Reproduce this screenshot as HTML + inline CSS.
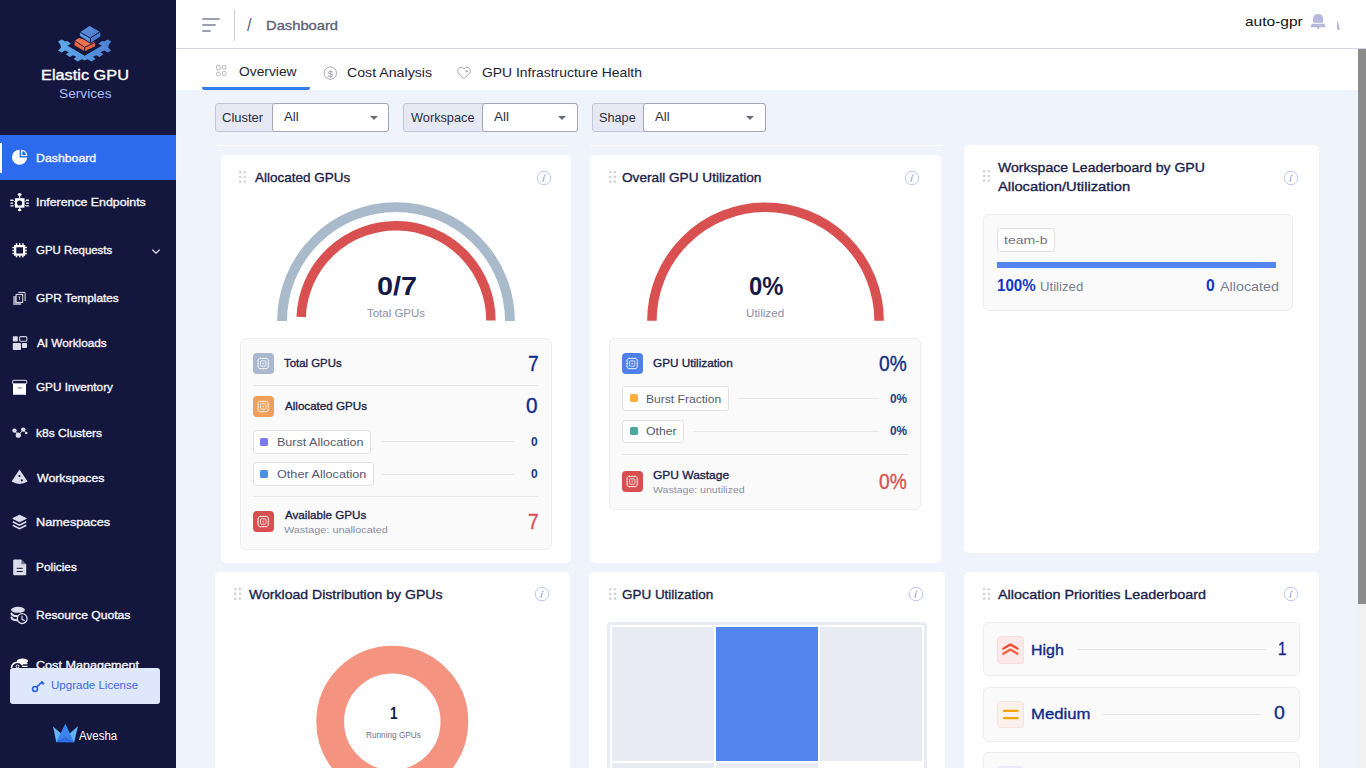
<!DOCTYPE html>
<html><head><meta charset="utf-8"><title>Dashboard</title>
<style>
*{margin:0;padding:0;box-sizing:border-box}
html,body{width:1366px;height:768px;overflow:hidden;background:#eff3fb;font-family:"Liberation Sans",sans-serif}
.a{position:absolute}
.t{position:absolute;white-space:nowrap;transform-origin:0 0}
#side{position:absolute;left:0;top:0;width:176px;height:768px;background:#14173d}
#act{position:absolute;left:0;top:135px;width:176px;height:45px;background:#2c6bed}
#actbar{position:absolute;left:0;top:143px;width:2px;height:30px;background:#fff}
#hdr{position:absolute;left:176px;top:0;width:1190px;height:49px;background:#fff;border-bottom:1px solid #d4d6de}
#tabs{position:absolute;left:176px;top:49px;width:1182px;height:41px;background:#fff}
#uline{position:absolute;left:202px;top:87px;width:108px;height:3px;background:#377bf0;border-radius:1px 1px 3px 3px}
.card{position:absolute;background:#fff;border-radius:5px}
.panel{position:absolute;background:#fafafa;border:1px solid #ededf0;border-radius:6px}
.pill{position:absolute;background:#fff;border:1px solid #e0e0e4;border-radius:3px}
.sq{position:absolute;width:8px;height:8px;border-radius:1.5px}
.ico{position:absolute;width:21px;height:21px;border-radius:4px}
.hl{position:absolute;height:1px;background:#e6e7ec}
.fg{position:absolute;height:29px;border:1px solid #c3c5d8;border-radius:3px;background:#e6e8f4}
.fsel{position:absolute;top:-1px;bottom:-1px;background:#fff;border:1px solid #a3a5b8;border-radius:3px;right:-1px!important}
.arr{position:absolute;width:0;height:0;border-left:4.5px solid transparent;border-right:4.5px solid transparent;border-top:4.5px solid #6b6f7c}
#sb{position:absolute;left:1358px;top:49px;width:8px;height:719px;background:#f1f1f1}
#sbt{position:absolute;left:1358px;top:49px;width:8px;height:555px;background:#8c8c8c}

</style></head><body>
<div id="side"></div>
<div id="act"></div>
<div id="actbar"></div>
<div id="hdr"></div>
<div id="tabs"></div>
<div id="uline"></div>
<!-- header bits -->
<div class="a" style="left:234px;top:10px;width:1px;height:31px;background:#c9cbd6"></div>
<div class="a" style="left:202px;top:18px;width:18px;height:2px;background:#9aa0b4;border-radius:1px"></div>
<div class="a" style="left:202px;top:24px;width:14px;height:2px;background:#9aa0b4;border-radius:1px"></div>
<div class="a" style="left:202px;top:30px;width:9px;height:2px;background:#9aa0b4;border-radius:1px"></div>

<!-- filters -->
<div class="fg" style="left:215px;top:103px;width:174px"><div class="fsel" style="left:56px;right:0"></div><div class="arr" style="left:154px;top:12px"></div></div>
<div class="fg" style="left:403px;top:103px;width:175px"><div class="fsel" style="left:78px;right:0"></div><div class="arr" style="left:154px;top:12px"></div></div>
<div class="fg" style="left:592px;top:103px;width:174px"><div class="fsel" style="left:50px;right:0"></div><div class="arr" style="left:153px;top:12px"></div></div>
<div class="a" style="left:217px;top:145px;width:351px;height:1px;background:#fff"></div><div class="a" style="left:591px;top:145px;width:352px;height:1px;background:#fff"></div>

<!-- cards -->
<div class="card" style="left:221px;top:155px;width:350px;height:408px"></div>
<div class="card" style="left:590px;top:155px;width:351px;height:408px"></div>
<div class="card" style="left:964px;top:145px;width:355px;height:408px"></div>
<div class="card" style="left:215px;top:572px;width:355px;height:220px"></div>
<div class="card" style="left:589px;top:572px;width:356px;height:220px"></div>
<div class="card" style="left:964px;top:572px;width:355px;height:220px"></div>

<!-- scrollbar -->
<div id="sb"></div><div id="sbt"></div>

<!-- card1 panel -->
<div class="panel" style="left:240px;top:338px;width:312px;height:212px"></div>
<div class="ico" style="left:253px;top:353px;background:#a9b8cc"></div>
<div class="hl" style="left:253px;top:385px;width:285px"></div>
<div class="ico" style="left:253px;top:396px;background:#f0a05a"></div>
<div class="pill" style="left:253px;top:430px;width:118px;height:24px"></div>
<div class="sq" style="left:260px;top:438px;background:#7b79f0"></div>
<div class="hl" style="left:381px;top:441px;width:133px"></div>
<div class="pill" style="left:253px;top:462px;width:121px;height:24px"></div>
<div class="sq" style="left:260px;top:470px;background:#4a90e2"></div>
<div class="hl" style="left:382px;top:474px;width:132px"></div>
<div class="hl" style="left:253px;top:496px;width:285px"></div>
<div class="ico" style="left:253px;top:511px;background:#d94f4f"></div>

<!-- card2 panel -->
<div class="panel" style="left:609px;top:338px;width:312px;height:172px"></div>
<div class="ico" style="left:622px;top:353px;background:#4f7fe8"></div>
<div class="pill" style="left:622px;top:386px;width:107px;height:25px"></div>
<div class="sq" style="left:630px;top:394px;background:#fdb040"></div>
<div class="hl" style="left:739px;top:398px;width:140px"></div>
<div class="pill" style="left:622px;top:420px;width:62px;height:23px"></div>
<div class="sq" style="left:630px;top:427px;background:#4aa99c"></div>
<div class="hl" style="left:693px;top:431px;width:186px"></div>
<div class="hl" style="left:622px;top:454px;width:286px"></div>
<div class="ico" style="left:622px;top:471px;background:#d94f4f"></div>

<!-- card3 panel -->
<div class="panel" style="left:983px;top:214px;width:310px;height:97px"></div>
<div class="pill" style="left:997px;top:228px;width:58px;height:24px"></div>
<div class="a" style="left:997px;top:262px;width:279px;height:6px;background:#5386ef"></div>

<!-- card5 heatmap -->
<div class="a" style="left:607px;top:622px;width:320px;height:160px;background:#e9ecf4;border-radius:4px"></div>
<div class="a" style="left:610px;top:625px;width:314px;height:150px;background:#fff"></div>
<div class="a" style="left:612px;top:627px;width:102px;height:134px;background:#e8ebf3"></div>
<div class="a" style="left:716px;top:627px;width:102px;height:134px;background:#5285f0"></div>
<div class="a" style="left:820px;top:627px;width:102px;height:134px;background:#e8ebf3"></div>
<div class="a" style="left:612px;top:763px;width:102px;height:10px;background:#e8ebf3"></div>
<div class="a" style="left:716px;top:763px;width:102px;height:10px;background:#e8ebf3"></div>

<!-- card6 -->
<div class="panel" style="left:983px;top:622px;width:317px;height:54px"></div>
<div class="a" style="left:997px;top:636px;width:27px;height:28px;background:#fce9ea;border:1px solid #f9dcdc;border-radius:4px"></div>
<div class="hl" style="left:1077px;top:649px;width:189px"></div>
<div class="panel" style="left:983px;top:687px;width:317px;height:55px"></div>
<div class="a" style="left:997px;top:701px;width:27px;height:27px;background:#fbf1ec;border:1px solid #f9e4da;border-radius:4px"></div>
<div class="hl" style="left:1103px;top:714px;width:158px"></div>
<div class="panel" style="left:983px;top:752px;width:317px;height:55px"></div>
<div class="a" style="left:997px;top:766px;width:27px;height:27px;background:#ecebfb;border-radius:4px"></div>

<!-- gauges -->
<svg class="a" style="left:0;top:0" width="1366" height="768">
 <path d="M 282.1 320.9 A 113.9 113.9 0 0 1 509.9 320.9" fill="none" stroke="#a9bacb" stroke-width="9.8"/>
 <path d="M 301.17 316.96 A 94.9 94.9 0 0 1 490.9 320.6" fill="none" stroke="#d95050" stroke-width="9.4"/>
 <path d="M 651.9 320.8 A 113.6 113.6 0 0 1 879.1 320.8" fill="none" stroke="#d95050" stroke-width="9.5"/>
 <circle cx="392.3" cy="721.7" r="62.1" fill="none" stroke="#f4937f" stroke-width="27.8"/>
</svg>
<!-- LOGO -->
<svg class="a" style="left:52px;top:20px" width="66" height="46" viewBox="0 0 1102 768">
 <defs><linearGradient id="lg1" x1="0" y1="0" x2="1" y2="0"><stop offset="0" stop-color="#5eaae9"/><stop offset="1" stop-color="#4d80d2"/></linearGradient>
 <linearGradient id="lg2" x1="0" y1="0" x2="1" y2="1"><stop offset="0" stop-color="#5b93de"/><stop offset="1" stop-color="#4a78cc"/></linearGradient></defs>
 <polygon fill="url(#lg1)" points="101,357 160,326 220,357 253,352 316,391 259,431 545,595 831,431 774,391 837,352 870,357 930,326 989,357 950,414 938,465 989,510 930,541 873,510 808,538 859,572 791,617 740,589 684,614 729,651 661,691 593,657 545,675 497,657 429,691 361,651 406,614 350,589 299,617 231,572 282,538 217,510 160,541 101,510 152,465 140,414"/>
 <polygon fill="#f0714f" points="380,345 450,300 720,375 545,455"/>
 <polygon fill="#e9663f" points="380,345 545,455 545,520 375,420"/>
 <polygon fill="#e5633f" points="545,455 720,375 720,440 545,520"/>
 <path d="M380,345 L545,455 L720,375 M545,455 L545,520" stroke="#14173d" stroke-width="14" fill="none"/>
 <polygon fill="#14173d" points="455,200 625,85 815,190 815,280 645,395 455,280"/>
 <polygon fill="url(#lg2)" points="470,205 625,100 800,195 640,300"/>
 <polygon fill="#5a97e0" points="465,210 640,305 640,380 465,265"/>
 <polygon fill="#4a7bd0" points="645,305 805,205 810,270 645,378"/>
 <path d="M470,205 L640,300 L800,195 M640,300 L640,380" stroke="#14173d" stroke-width="14" fill="none"/>
</svg>

<!-- SIDEBAR ICONS (24x24 at x=8) -->
<svg class="a" style="left:8px;top:145px" width="24" height="24" viewBox="0 0 24 24">
 <path d="M11.6 4.7 A7.55 7.55 0 1 0 19.1 12.4 L11.6 12.4 Z" fill="#fff"/>
 <path d="M13.6 5.3 A5.6 5.6 0 0 1 18.7 10.5 L13.6 10.5 Z" fill="none" stroke="#fff" stroke-width="1.2"/>
</svg>
<svg class="a" style="left:8px;top:190px" width="24" height="24" viewBox="0 0 24 24" fill="#fff">
 <rect x="7" y="8.2" width="9.5" height="9.5"/>
 <circle cx="11.6" cy="13" r="2.6" fill="#14173d"/>
 <ellipse cx="11.6" cy="4.6" rx="2" ry="1.3"/><rect x="11" y="5.5" width="1.2" height="3"/>
 <ellipse cx="11.6" cy="20" rx="1.8" ry="1.3"/><rect x="11" y="17.5" width="1.2" height="2"/>
 <rect x="2.3" y="9.6" width="3" height="1.4" rx=".6"/><rect x="2.3" y="12.4" width="3" height="1.4" rx=".6"/><rect x="2.3" y="15.2" width="3" height="1.4" rx=".6"/>
 <rect x="18" y="9.6" width="3" height="1.4" rx=".6"/><rect x="18" y="12.4" width="3" height="1.4" rx=".6"/><rect x="18" y="15.2" width="3" height="1.4" rx=".6"/>
 <path d="M5.3 10.3 L7 12 M5.3 15.9 L7 14.5 M18 10.3 L16.5 12 M18 15.9 L16.5 14.5" stroke="#fff" stroke-width=".8"/>
</svg>
<svg class="a" style="left:8px;top:238px" width="24" height="24" viewBox="0 0 24 24" fill="#fff">
 <path fill-rule="evenodd" d="M6 7 H17.3 V17.8 H6 Z M8.3 9.2 V15.6 H15 V9.2 Z"/>
 <rect x="7.8" y="5.2" width="1.4" height="2"/><rect x="11" y="5.2" width="1.4" height="2"/><rect x="14.2" y="5.2" width="1.4" height="2"/>
 <rect x="7.8" y="17.6" width="1.4" height="1.8"/><rect x="11" y="17.6" width="1.4" height="1.8"/><rect x="14.2" y="17.6" width="1.4" height="1.8"/>
 <rect x="4.4" y="8.8" width="1.8" height="1.4"/><rect x="4.4" y="11.8" width="1.8" height="1.4"/><rect x="4.4" y="14.8" width="1.8" height="1.4"/>
 <rect x="17.2" y="8.8" width="1.8" height="1.4"/><rect x="17.2" y="11.8" width="1.8" height="1.4"/><rect x="17.2" y="14.8" width="1.8" height="1.4"/>
</svg>
<svg class="a" style="left:8px;top:286px" width="24" height="24" viewBox="0 0 24 24">
 <path d="M10.3 6.4 H16.6 Q17.1 6.4 17.1 7 V15" fill="none" stroke="#e6e6ef" stroke-width="1"/>
 <rect x="5.2" y="10" width="8" height="9" fill="#9c9eb8"/>
 <rect x="8.1" y="8.4" width="6.6" height="8" fill="#14173d" stroke="#e6e6ef" stroke-width="1"/>
 <path d="M10.2 10.5 H12.6 L11.4 12 Z M11.1 11.5 H11.8 V14 H11.1Z" fill="#e6e6ef"/>
</svg>
<svg class="a" style="left:8px;top:331px" width="24" height="24" viewBox="0 0 24 24" fill="#dcdcea">
 <rect x="4.8" y="5.3" width="5" height="5.2" rx=".8"/>
 <rect x="11.6" y="5.6" width="7.2" height="4.6" rx="1" fill="none" stroke="#cfd0e2" stroke-width="1.1"/>
 <rect x="4.8" y="12" width="8.2" height="7" rx=".8"/>
 <rect x="14" y="12" width="5" height="5" rx=".8"/>
</svg>
<svg class="a" style="left:8px;top:376px" width="24" height="24" viewBox="0 0 24 24">
 <rect x="4.6" y="4.4" width="14.2" height="3.4" rx="1" fill="none" stroke="#b8b9cc" stroke-width="1.1"/>
 <rect x="5" y="7.8" width="13" height="11" rx=".6" fill="#fff"/>
 <rect x="9.4" y="11.2" width="4.6" height="1.2" rx=".6" fill="#8a8ca6"/>
</svg>
<svg class="a" style="left:8px;top:421px" width="24" height="24" viewBox="0 0 24 24" fill="#dcdcea">
 <circle cx="6.5" cy="9.6" r="2.2"/><circle cx="10.3" cy="14.2" r="2.6"/><circle cx="15.3" cy="8.6" r="2.2"/><circle cx="18.2" cy="12" r="1.3"/>
 <path d="M6.5 9.6 L10.3 14.2 L15.3 8.6 L18.2 12" stroke="#dcdcea" stroke-width="1" fill="none"/>
</svg>
<svg class="a" style="left:8px;top:465px" width="24" height="24" viewBox="0 0 24 24">
 <path d="M11.5 4.6 L19.6 16.6 Q11.5 21.5 3.6 16.6 Z" fill="#dcdcea"/>
 <circle cx="11.5" cy="11" r="1.1" fill="#14173d"/><circle cx="13.8" cy="15.3" r="1.1" fill="#14173d"/>
</svg>
<svg class="a" style="left:8px;top:510px" width="24" height="24" viewBox="0 0 24 24" fill="none" stroke="#dcdcea" stroke-width="1.6">
 <path d="M4.8 8.5 L11.5 5.2 L18.3 8.5 L11.5 11.8 Z" fill="#dcdcea" stroke-width="1"/>
 <path d="M4.8 11.8 L11.5 15.2 L18.3 11.8"/>
 <path d="M4.8 15.2 L11.5 18.6 L18.3 15.2"/>
</svg>
<svg class="a" style="left:8px;top:555px" width="24" height="24" viewBox="0 0 24 24">
 <path d="M6.3 4.6 H13.2 L18.2 9.6 V19.2 Q18.2 20.2 17.2 20.2 H6.3 Q5.2 20.2 5.2 19.2 V5.6 Q5.2 4.6 6.3 4.6 Z" fill="#dcdcea"/>
 <path d="M13.4 4.8 V9.3 H18" fill="#6e7090"/>
 <rect x="8.7" y="12.8" width="6" height="1" fill="#14173d"/><rect x="8.7" y="16" width="6" height="1" fill="#14173d"/>
</svg>
<svg class="a" style="left:8px;top:603px" width="24" height="24" viewBox="0 0 24 24">
 <ellipse cx="10" cy="6.8" rx="6.9" ry="3" fill="#dcdcea"/>
 <path d="M3.5 10.6 Q4.5 13.4 10.5 13.2 M3.5 14.6 Q4.5 17.4 10 17.2" stroke="#dcdcea" stroke-width="2.1" fill="none" stroke-linecap="round"/>
 <circle cx="14.2" cy="15.6" r="4.9" fill="#14173d" stroke="#dcdcea" stroke-width="1.3"/>
 <path d="M14 12.8 V16.3 L16.6 17.6" stroke="#dcdcea" stroke-width="1.2" fill="none"/>
</svg>
<svg class="a" style="left:8px;top:652px" width="24" height="16" viewBox="0 0 24 16">
 <ellipse cx="14.5" cy="9" rx="5.5" ry="2.4" fill="#fff"/>
 <path d="M3.5 16 A6 6 0 0 1 14.5 13" stroke="#fff" stroke-width="1.6" fill="none"/>
 <path d="M14 11.5 H19.5 M14 14.3 H19.5" stroke="#fff" stroke-width="1.3"/>
 <circle cx="9.5" cy="14.5" r="1.5" fill="none" stroke="#fff" stroke-width="1"/>
</svg>
<svg class="a" style="left:150px;top:246px" width="12" height="10" viewBox="0 0 12 10"><path d="M2.3 3.6 L6 7.2 L9.7 3.6" stroke="#e8e9f2" stroke-width="1.3" fill="none"/></svg>

<!-- upgrade license -->
<div class="a" style="left:10px;top:668px;width:150px;height:36px;background:#dfe7fd;border-radius:3px;z-index:5"></div>
<svg class="a" style="left:26px;top:672px;z-index:6" width="30" height="26" viewBox="0 0 30 26">
 <circle cx="9" cy="16.9" r="2.4" fill="none" stroke="#2f63e8" stroke-width="1.7"/>
 <path d="M10.7 15.2 L16.5 9.3" stroke="#2f63e8" stroke-width="1.7"/>
 <path d="M15.3 11 L17.2 12.6 L18.2 11.4 L16.4 9.6" fill="#2f63e8" stroke="#2f63e8" stroke-width=".8"/>
</svg>
<!-- avesha -->
<svg class="a" style="left:46px;top:718px" width="34" height="32" viewBox="0 0 580 546">
 <polygon fill="#60b4f6" points="120,145 330,330 175,415"/>
 <polygon fill="#60b4f6" points="545,140 330,330 480,420"/>
 <polygon fill="#3a86ee" points="330,100 245,268 330,330 412,268"/>
 <polygon fill="#3b7fec" points="245,268 175,415 330,330"/>
 <polygon fill="#3b7fec" points="412,268 480,420 330,330"/>
 <polygon fill="#2f6de4" points="175,415 330,330 480,420"/>
</svg>

<!-- header icons -->
<svg class="a" style="left:1300px;top:8px" width="50" height="30" viewBox="0 0 1280 768" fill="#b6b9da">
 <path d="M335,380 L335,290 Q335,155 465,155 Q595,155 595,290 L595,380 Z"/>
 <polygon points="300,405 630,405 660,490 270,490"/>
 <polygon points="420,490 510,490 465,555"/>
 <polygon points="950,330 970,330 1020,555 945,555"/>
</svg>
<svg class="a" style="left:214px;top:63px" width="16" height="16" viewBox="0 0 16 16" fill="none" stroke="#b4b5bd" stroke-width="1">
 <rect x="2.5" y="2.5" width="3.6" height="4.4" rx="1.2"/><rect x="8.4" y="2.5" width="3.6" height="3.6" rx="1.2"/>
 <rect x="2.5" y="9.2" width="3.6" height="3.6" rx="1.2"/><rect x="8.4" y="8.4" width="3.6" height="4.4" rx="1.2"/>
</svg>
<svg class="a" style="left:315px;top:60px" width="30" height="24" viewBox="0 0 30 24">
 <circle cx="15.3" cy="13.1" r="6.2" fill="none" stroke="#a8aab3" stroke-width="1"/>
 <text x="15.3" y="16.5" font-size="9.5" text-anchor="middle" fill="#a0a3ad" font-family="Liberation Sans">$</text>
</svg>
<svg class="a" style="left:450px;top:60px" width="30" height="24" viewBox="0 0 30 24">
 <path d="M14 18.6 L8.9 13.8 Q7.2 12 8.1 9.4 Q9.1 7 11.3 7.2 Q12.8 7.3 14 8.5 Q15.3 7.3 17 7.2 Q19.4 7.2 20.2 9.6 Q20.8 11.8 19.4 13.5 Z" fill="none" stroke="#a8aab3" stroke-width="1"/>
 <path d="M15.2 11.3 L16.8 10 L18.3 11.3 L16.8 12.6 Z" fill="#a8aab3"/>
</svg>
<svg class="a" style="left:239.3px;top:171.3px" width="8" height="13" viewBox="0 0 8 13" fill="#d5d6dd"><circle cx="1.2" cy="1.2" r="1.35"/><circle cx="1.2" cy="5.95" r="1.35"/><circle cx="1.2" cy="10.7" r="1.35"/><circle cx="5.9" cy="1.2" r="1.35"/><circle cx="5.9" cy="5.95" r="1.35"/><circle cx="5.9" cy="10.7" r="1.35"/></svg>
<svg class="a" style="left:608.8px;top:171.3px" width="8" height="13" viewBox="0 0 8 13" fill="#d5d6dd"><circle cx="1.2" cy="1.2" r="1.35"/><circle cx="1.2" cy="5.95" r="1.35"/><circle cx="1.2" cy="10.7" r="1.35"/><circle cx="5.9" cy="1.2" r="1.35"/><circle cx="5.9" cy="5.95" r="1.35"/><circle cx="5.9" cy="10.7" r="1.35"/></svg>
<svg class="a" style="left:982.7px;top:169.8px" width="8" height="13" viewBox="0 0 8 13" fill="#d5d6dd"><circle cx="1.2" cy="1.2" r="1.35"/><circle cx="1.2" cy="5.95" r="1.35"/><circle cx="1.2" cy="10.7" r="1.35"/><circle cx="5.9" cy="1.2" r="1.35"/><circle cx="5.9" cy="5.95" r="1.35"/><circle cx="5.9" cy="10.7" r="1.35"/></svg>
<svg class="a" style="left:233.5px;top:588px" width="8" height="13" viewBox="0 0 8 13" fill="#d5d6dd"><circle cx="1.2" cy="1.2" r="1.35"/><circle cx="1.2" cy="5.95" r="1.35"/><circle cx="1.2" cy="10.7" r="1.35"/><circle cx="5.9" cy="1.2" r="1.35"/><circle cx="5.9" cy="5.95" r="1.35"/><circle cx="5.9" cy="10.7" r="1.35"/></svg>
<svg class="a" style="left:609px;top:588.3px" width="8" height="13" viewBox="0 0 8 13" fill="#d5d6dd"><circle cx="1.2" cy="1.2" r="1.35"/><circle cx="1.2" cy="5.95" r="1.35"/><circle cx="1.2" cy="10.7" r="1.35"/><circle cx="5.9" cy="1.2" r="1.35"/><circle cx="5.9" cy="5.95" r="1.35"/><circle cx="5.9" cy="10.7" r="1.35"/></svg>
<svg class="a" style="left:982.8px;top:588.3px" width="8" height="13" viewBox="0 0 8 13" fill="#d5d6dd"><circle cx="1.2" cy="1.2" r="1.35"/><circle cx="1.2" cy="5.95" r="1.35"/><circle cx="1.2" cy="10.7" r="1.35"/><circle cx="5.9" cy="1.2" r="1.35"/><circle cx="5.9" cy="5.95" r="1.35"/><circle cx="5.9" cy="10.7" r="1.35"/></svg>
<svg class="a" style="left:535.5px;top:170.2px" width="16" height="16" viewBox="0 0 16 16"><circle cx="8" cy="8" r="6.8" fill="none" stroke="#bcc8ee" stroke-width="1"/><circle cx="8.7" cy="5.3" r=".9" fill="#a9b8e6"/><path d="M8.1 7.1 L7 11.3" stroke="#a9b8e6" stroke-width="1.5" stroke-linecap="round"/></svg>
<svg class="a" style="left:904.3px;top:170.2px" width="16" height="16" viewBox="0 0 16 16"><circle cx="8" cy="8" r="6.8" fill="none" stroke="#bcc8ee" stroke-width="1"/><circle cx="8.7" cy="5.3" r=".9" fill="#a9b8e6"/><path d="M8.1 7.1 L7 11.3" stroke="#a9b8e6" stroke-width="1.5" stroke-linecap="round"/></svg>
<svg class="a" style="left:1283px;top:169.5px" width="16" height="16" viewBox="0 0 16 16"><circle cx="8" cy="8" r="6.8" fill="none" stroke="#bcc8ee" stroke-width="1"/><circle cx="8.7" cy="5.3" r=".9" fill="#a9b8e6"/><path d="M8.1 7.1 L7 11.3" stroke="#a9b8e6" stroke-width="1.5" stroke-linecap="round"/></svg>
<svg class="a" style="left:533.8px;top:586.2px" width="16" height="16" viewBox="0 0 16 16"><circle cx="8" cy="8" r="6.8" fill="none" stroke="#bcc8ee" stroke-width="1"/><circle cx="8.7" cy="5.3" r=".9" fill="#a9b8e6"/><path d="M8.1 7.1 L7 11.3" stroke="#a9b8e6" stroke-width="1.5" stroke-linecap="round"/></svg>
<svg class="a" style="left:908px;top:586.3px" width="16" height="16" viewBox="0 0 16 16"><circle cx="8" cy="8" r="6.8" fill="none" stroke="#bcc8ee" stroke-width="1"/><circle cx="8.7" cy="5.3" r=".9" fill="#a9b8e6"/><path d="M8.1 7.1 L7 11.3" stroke="#a9b8e6" stroke-width="1.5" stroke-linecap="round"/></svg>
<svg class="a" style="left:1282.8px;top:586.2px" width="16" height="16" viewBox="0 0 16 16"><circle cx="8" cy="8" r="6.8" fill="none" stroke="#bcc8ee" stroke-width="1"/><circle cx="8.7" cy="5.3" r=".9" fill="#a9b8e6"/><path d="M8.1 7.1 L7 11.3" stroke="#a9b8e6" stroke-width="1.5" stroke-linecap="round"/></svg>
<svg class="a" style="left:253px;top:353px" width="21" height="21" viewBox="0 0 21 21" fill="none" stroke="rgba(255,255,255,.75)" stroke-width="1"><rect x="5.2" y="5.5" width="10" height="10" rx="1.5"/><rect x="7.5" y="7.8" width="5.4" height="5.4" rx="1"/><path d="M7.5 4.5 V5.5 M10.2 4.5 V5.5 M12.9 4.5 V5.5 M7.5 15.5 V16.5 M10.2 15.5 V16.5 M12.9 15.5 V16.5 M4.2 8 H5.2 M4.2 10.5 H5.2 M4.2 13 H5.2 M15.2 8 H16.2 M15.2 10.5 H16.2 M15.2 13 H16.2"/><circle cx="10.2" cy="10.5" r="1" fill="rgba(255,255,255,.6)" stroke="none"/></svg>
<svg class="a" style="left:253px;top:396px" width="21" height="21" viewBox="0 0 21 21" fill="none" stroke="rgba(255,255,255,.75)" stroke-width="1"><rect x="5.2" y="5.5" width="10" height="10" rx="1.5"/><rect x="7.5" y="7.8" width="5.4" height="5.4" rx="1"/><path d="M7.5 4.5 V5.5 M10.2 4.5 V5.5 M12.9 4.5 V5.5 M7.5 15.5 V16.5 M10.2 15.5 V16.5 M12.9 15.5 V16.5 M4.2 8 H5.2 M4.2 10.5 H5.2 M4.2 13 H5.2 M15.2 8 H16.2 M15.2 10.5 H16.2 M15.2 13 H16.2"/><circle cx="10.2" cy="10.5" r="1" fill="rgba(255,255,255,.6)" stroke="none"/></svg>
<svg class="a" style="left:253px;top:511px" width="21" height="21" viewBox="0 0 21 21" fill="none" stroke="rgba(255,255,255,.75)" stroke-width="1"><rect x="5.2" y="5.5" width="10" height="10" rx="1.5"/><rect x="7.5" y="7.8" width="5.4" height="5.4" rx="1"/><path d="M7.5 4.5 V5.5 M10.2 4.5 V5.5 M12.9 4.5 V5.5 M7.5 15.5 V16.5 M10.2 15.5 V16.5 M12.9 15.5 V16.5 M4.2 8 H5.2 M4.2 10.5 H5.2 M4.2 13 H5.2 M15.2 8 H16.2 M15.2 10.5 H16.2 M15.2 13 H16.2"/><circle cx="10.2" cy="10.5" r="1" fill="rgba(255,255,255,.6)" stroke="none"/></svg>
<svg class="a" style="left:622px;top:353px" width="21" height="21" viewBox="0 0 21 21" fill="none" stroke="rgba(255,255,255,.75)" stroke-width="1"><rect x="5.2" y="5.5" width="10" height="10" rx="1.5"/><rect x="7.5" y="7.8" width="5.4" height="5.4" rx="1"/><path d="M7.5 4.5 V5.5 M10.2 4.5 V5.5 M12.9 4.5 V5.5 M7.5 15.5 V16.5 M10.2 15.5 V16.5 M12.9 15.5 V16.5 M4.2 8 H5.2 M4.2 10.5 H5.2 M4.2 13 H5.2 M15.2 8 H16.2 M15.2 10.5 H16.2 M15.2 13 H16.2"/><circle cx="10.2" cy="10.5" r="1" fill="rgba(255,255,255,.6)" stroke="none"/></svg>
<svg class="a" style="left:622px;top:471px" width="21" height="21" viewBox="0 0 21 21" fill="none" stroke="rgba(255,255,255,.75)" stroke-width="1"><rect x="5.2" y="5.5" width="10" height="10" rx="1.5"/><rect x="7.5" y="7.8" width="5.4" height="5.4" rx="1"/><path d="M7.5 4.5 V5.5 M10.2 4.5 V5.5 M12.9 4.5 V5.5 M7.5 15.5 V16.5 M10.2 15.5 V16.5 M12.9 15.5 V16.5 M4.2 8 H5.2 M4.2 10.5 H5.2 M4.2 13 H5.2 M15.2 8 H16.2 M15.2 10.5 H16.2 M15.2 13 H16.2"/><circle cx="10.2" cy="10.5" r="1" fill="rgba(255,255,255,.6)" stroke="none"/></svg>
<svg class="a" style="left:997px;top:636px" width="27" height="28" viewBox="0 0 27 28" fill="none" stroke-linecap="round" stroke-linejoin="round" stroke-width="2.2"><path d="M6.3 12.6 L13.4 8.5 L20.5 12.6" stroke="#f4462a"/><path d="M6.3 17.8 L13.4 13.5 L20.5 17.8" stroke="#f6603f"/></svg>
<svg class="a" style="left:997px;top:701px" width="27" height="27" viewBox="0 0 27 27" stroke-linecap="round" stroke-width="2.3" stroke="#f5a300"><path d="M7 9.8 H20.6 M7 17.1 H20.6"/></svg>
<div id="t0" class="t" style="left:40.5px;top:67.30px;font-size:15px;line-height:15px;color:#ffffff;font-weight:400;-webkit-text-stroke:0.35px #ffffff;transform:scaleX(1.0877);">Elastic GPU</div>
<div id="t1" class="t" style="left:58.7px;top:88.42px;font-size:12.5px;line-height:12.5px;color:#a8bff0;font-weight:400;transform:scaleX(1.0958);">Services</div>
<div id="side0" class="t" style="left:36.0px;top:153.27px;font-size:11.5px;line-height:11.5px;color:#f4f5fb;font-weight:400;-webkit-text-stroke:0.35px #f4f5fb;transform:scaleX(1.0702);">Dashboard</div>
<div id="side1" class="t" style="left:35.5px;top:197.27px;font-size:11.5px;line-height:11.5px;color:#f4f5fb;font-weight:400;-webkit-text-stroke:0.35px #f4f5fb;transform:scaleX(1.0728);">Inference Endpoints</div>
<div id="side2" class="t" style="left:35.5px;top:245.27px;font-size:11.5px;line-height:11.5px;color:#f4f5fb;font-weight:400;-webkit-text-stroke:0.35px #f4f5fb;transform:scaleX(0.9935);">GPU Requests</div>
<div id="side3" class="t" style="left:35.5px;top:293.27px;font-size:11.5px;line-height:11.5px;color:#f4f5fb;font-weight:400;-webkit-text-stroke:0.35px #f4f5fb;transform:scaleX(1.0309);">GPR Templates</div>
<div id="side4" class="t" style="left:36.5px;top:338.27px;font-size:11.5px;line-height:11.5px;color:#f4f5fb;font-weight:400;-webkit-text-stroke:0.35px #f4f5fb;transform:scaleX(1.0214);">AI Workloads</div>
<div id="side5" class="t" style="left:35.5px;top:382.27px;font-size:11.5px;line-height:11.5px;color:#f4f5fb;font-weight:400;-webkit-text-stroke:0.35px #f4f5fb;transform:scaleX(1.0197);">GPU Inventory</div>
<div id="side6" class="t" style="left:35.5px;top:428.27px;font-size:11.5px;line-height:11.5px;color:#f4f5fb;font-weight:400;-webkit-text-stroke:0.35px #f4f5fb;transform:scaleX(1.0453);">k8s Clusters</div>
<div id="side7" class="t" style="left:36.6px;top:473.27px;font-size:11.5px;line-height:11.5px;color:#f4f5fb;font-weight:400;-webkit-text-stroke:0.35px #f4f5fb;transform:scaleX(1.0703);">Workspaces</div>
<div id="side8" class="t" style="left:35.5px;top:517.27px;font-size:11.5px;line-height:11.5px;color:#f4f5fb;font-weight:400;-webkit-text-stroke:0.35px #f4f5fb;transform:scaleX(1.1045);">Namespaces</div>
<div id="side9" class="t" style="left:35.5px;top:562.27px;font-size:11.5px;line-height:11.5px;color:#f4f5fb;font-weight:400;-webkit-text-stroke:0.35px #f4f5fb;transform:scaleX(1.0325);">Policies</div>
<div id="side10" class="t" style="left:35.8px;top:610.27px;font-size:11.5px;line-height:11.5px;color:#f4f5fb;font-weight:400;-webkit-text-stroke:0.35px #f4f5fb;transform:scaleX(1.0544);">Resource Quotas</div>
<div id="side11" class="t" style="left:35.8px;top:660.27px;font-size:11.5px;line-height:11.5px;color:#f4f5fb;font-weight:400;-webkit-text-stroke:0.35px #f4f5fb;transform:scaleX(1.0968);">Cost Management</div>
<div id="t14" class="t" style="left:51.3px;top:680.27px;font-size:11.5px;line-height:11.5px;color:#3a6ae6;font-weight:400;transform:scaleX(1.0023);z-index:6;">Upgrade License</div>
<div id="t15" class="t" style="left:78.7px;top:730.42px;font-size:12.5px;line-height:12.5px;color:#ffffff;font-weight:400;transform:scaleX(0.9214);">Avesha</div>
<div id="t16" class="t" style="left:247.0px;top:15.76px;font-size:18px;line-height:18px;color:#5c6378;font-weight:400;transform:scaleX(0.9167);">/</div>
<div id="t17" class="t" style="left:266.0px;top:18.57px;font-size:13.5px;line-height:13.5px;color:#5c6378;font-weight:400;-webkit-text-stroke:0.35px #5c6378;transform:scaleX(1.0909);">Dashboard</div>
<div id="t18" class="t" style="left:1245.0px;top:14.57px;font-size:13.5px;line-height:13.5px;color:#111111;font-weight:400;transform:scaleX(1.1471);">auto-gpr</div>
<div id="t19" class="t" style="left:238.6px;top:65.00px;font-size:13px;line-height:13px;color:#1e2235;font-weight:400;transform:scaleX(1.0618);">Overview</div>
<div id="t20" class="t" style="left:347.0px;top:66.00px;font-size:13px;line-height:13px;color:#1e2235;font-weight:400;transform:scaleX(1.0897);">Cost Analysis</div>
<div id="t21" class="t" style="left:481.6px;top:66.00px;font-size:13px;line-height:13px;color:#1e2235;font-weight:400;transform:scaleX(1.0693);">GPU Infrastructure Health</div>
<div id="t22" class="t" style="left:222.4px;top:112.42px;font-size:12.5px;line-height:12.5px;color:#2a2e3c;font-weight:400;transform:scaleX(1.0400);">Cluster</div>
<div id="t23" class="t" style="left:283.7px;top:111.42px;font-size:12.5px;line-height:12.5px;color:#2a2e3c;font-weight:400;transform:scaleX(1.0571);">All</div>
<div id="t24" class="t" style="left:410.6px;top:112.42px;font-size:12.5px;line-height:12.5px;color:#2a2e3c;font-weight:400;transform:scaleX(1.0194);">Workspace</div>
<div id="t25" class="t" style="left:494.0px;top:111.42px;font-size:12.5px;line-height:12.5px;color:#2a2e3c;font-weight:400;transform:scaleX(1.0714);">All</div>
<div id="t26" class="t" style="left:599.0px;top:112.42px;font-size:12.5px;line-height:12.5px;color:#2a2e3c;font-weight:400;transform:scaleX(1.0167);">Shape</div>
<div id="t27" class="t" style="left:655.3px;top:111.42px;font-size:12.5px;line-height:12.5px;color:#2a2e3c;font-weight:400;transform:scaleX(1.0500);">All</div>
<div id="t28" class="t" style="left:254.6px;top:171.00px;font-size:13px;line-height:13px;color:#1b1f4b;font-weight:400;-webkit-text-stroke:0.35px #1b1f4b;transform:scaleX(1.0366);">Allocated GPUs</div>
<div id="t29" class="t" style="left:622.4px;top:171.00px;font-size:13px;line-height:13px;color:#1b1f4b;font-weight:400;-webkit-text-stroke:0.35px #1b1f4b;transform:scaleX(1.0489);">Overall GPU Utilization</div>
<div id="t30" class="t" style="left:997.7px;top:161.00px;font-size:13px;line-height:13px;color:#1b1f4b;font-weight:400;-webkit-text-stroke:0.35px #1b1f4b;transform:scaleX(1.0818);">Workspace Leaderboard by GPU</div>
<div id="t31" class="t" style="left:997.7px;top:180.00px;font-size:13px;line-height:13px;color:#1b1f4b;font-weight:400;-webkit-text-stroke:0.35px #1b1f4b;transform:scaleX(1.1356);">Allocation/Utilization</div>
<div id="t32" class="t" style="left:249.1px;top:588.00px;font-size:13px;line-height:13px;color:#1b1f4b;font-weight:400;-webkit-text-stroke:0.35px #1b1f4b;transform:scaleX(1.0817);">Workload Distribution by GPUs</div>
<div id="t33" class="t" style="left:622.3px;top:588.00px;font-size:13px;line-height:13px;color:#1b1f4b;font-weight:400;-webkit-text-stroke:0.35px #1b1f4b;transform:scaleX(1.0348);">GPU Utilization</div>
<div id="t34" class="t" style="left:997.7px;top:588.00px;font-size:13px;line-height:13px;color:#1b1f4b;font-weight:400;-webkit-text-stroke:0.35px #1b1f4b;transform:scaleX(1.1069);">Allocation Priorities Leaderboard</div>
<div id="t35" class="t" style="left:376.6px;top:273.84px;font-size:25px;line-height:25px;color:#141a46;font-weight:700;transform:scaleX(1.1529);">0/7</div>
<div id="t36" class="t" style="left:367.0px;top:308.27px;font-size:11.5px;line-height:11.5px;color:#8a90a8;font-weight:400;transform:scaleX(0.9966);">Total GPUs</div>
<div id="t37" class="t" style="left:284.0px;top:358.27px;font-size:11.5px;line-height:11.5px;color:#1b1f4b;font-weight:400;-webkit-text-stroke:0.35px #1b1f4b;transform:scaleX(0.9915);">Total GPUs</div>
<div id="t38" class="t" style="left:527.8px;top:352.95px;font-size:22.5px;line-height:22.5px;color:#0f2b88;font-weight:400;-webkit-text-stroke:0.35px #0f2b88;transform:scaleX(0.8500);">7</div>
<div id="t39" class="t" style="left:285.0px;top:401.27px;font-size:11.5px;line-height:11.5px;color:#1b1f4b;font-weight:400;-webkit-text-stroke:0.35px #1b1f4b;transform:scaleX(1.0096);">Allocated GPUs</div>
<div id="t40" class="t" style="left:526.0px;top:394.95px;font-size:22.5px;line-height:22.5px;color:#0f2b88;font-weight:400;-webkit-text-stroke:0.35px #0f2b88;transform:scaleX(0.9231);">0</div>
<div id="t41" class="t" style="left:276.9px;top:437.27px;font-size:11.5px;line-height:11.5px;color:#555a6e;font-weight:400;transform:scaleX(1.0899);">Burst Allocation</div>
<div id="t42" class="t" style="left:531.0px;top:435.84px;font-size:12px;line-height:12px;color:#1d3a8a;font-weight:700;">0</div>
<div id="t43" class="t" style="left:277.0px;top:469.27px;font-size:11.5px;line-height:11.5px;color:#555a6e;font-weight:400;transform:scaleX(1.1012);">Other Allocation</div>
<div id="t44" class="t" style="left:531.0px;top:467.84px;font-size:12px;line-height:12px;color:#1d3a8a;font-weight:700;">0</div>
<div id="t45" class="t" style="left:285.0px;top:510.27px;font-size:11.5px;line-height:11.5px;color:#1b1f4b;font-weight:400;-webkit-text-stroke:0.35px #1b1f4b;transform:scaleX(1.0110);">Available GPUs</div>
<div id="t46" class="t" style="left:284.0px;top:524.96px;font-size:9.5px;line-height:9.5px;color:#8a8fa3;font-weight:400;transform:scaleX(1.1407);">Wastage: unallocated</div>
<div id="t47" class="t" style="left:527.8px;top:510.95px;font-size:22.5px;line-height:22.5px;color:#d94f4f;font-weight:400;-webkit-text-stroke:0.35px #d94f4f;transform:scaleX(0.8500);">7</div>
<div id="t48" class="t" style="left:748.5px;top:273.84px;font-size:25px;line-height:25px;color:#141a46;font-weight:700;transform:scaleX(0.9528);">0%</div>
<div id="t49" class="t" style="left:746.0px;top:308.27px;font-size:11.5px;line-height:11.5px;color:#8a90a8;font-weight:400;transform:scaleX(1.0105);">Utilized</div>
<div id="t50" class="t" style="left:652.8px;top:358.27px;font-size:11.5px;line-height:11.5px;color:#1b1f4b;font-weight:400;-webkit-text-stroke:0.35px #1b1f4b;transform:scaleX(1.0218);">GPU Utilization</div>
<div id="t51" class="t" style="left:879.4px;top:352.95px;font-size:22.5px;line-height:22.5px;color:#0f2b88;font-weight:400;-webkit-text-stroke:0.35px #0f2b88;transform:scaleX(0.8515);">0%</div>
<div id="t52" class="t" style="left:646.0px;top:394.27px;font-size:11.5px;line-height:11.5px;color:#555a6e;font-weight:400;transform:scaleX(1.0500);">Burst Fraction</div>
<div id="t53" class="t" style="left:889.7px;top:392.84px;font-size:12px;line-height:12px;color:#1d3a8a;font-weight:700;transform:scaleX(0.9889);">0%</div>
<div id="t54" class="t" style="left:646.0px;top:426.27px;font-size:11.5px;line-height:11.5px;color:#555a6e;font-weight:400;transform:scaleX(1.0655);">Other</div>
<div id="t55" class="t" style="left:889.7px;top:424.84px;font-size:12px;line-height:12px;color:#1d3a8a;font-weight:700;transform:scaleX(0.9889);">0%</div>
<div id="t56" class="t" style="left:652.8px;top:470.27px;font-size:11.5px;line-height:11.5px;color:#1b1f4b;font-weight:400;-webkit-text-stroke:0.35px #1b1f4b;transform:scaleX(1.0411);">GPU Wastage</div>
<div id="t57" class="t" style="left:652.8px;top:484.96px;font-size:9.5px;line-height:9.5px;color:#8a8fa3;font-weight:400;transform:scaleX(1.1108);">Wastage: unutilized</div>
<div id="t58" class="t" style="left:879.4px;top:470.95px;font-size:22.5px;line-height:22.5px;color:#d94f4f;font-weight:400;-webkit-text-stroke:0.35px #d94f4f;transform:scaleX(0.8515);">0%</div>
<div id="t59" class="t" style="left:1004.2px;top:235.27px;font-size:11.5px;line-height:11.5px;color:#6f7385;font-weight:400;transform:scaleX(1.2167);">team-b</div>
<div id="t60" class="t" style="left:997.0px;top:276.61px;font-size:17px;line-height:17px;color:#1237c6;font-weight:700;transform:scaleX(0.8909);">100%</div>
<div id="t61" class="t" style="left:1040.4px;top:280.00px;font-size:13px;line-height:13px;color:#7a7e90;font-weight:400;transform:scaleX(1.0140);">Utilized</div>
<div id="t62" class="t" style="left:1205.8px;top:276.61px;font-size:17px;line-height:17px;color:#1237c6;font-weight:700;transform:scaleX(0.9200);">0</div>
<div id="t63" class="t" style="left:1220.0px;top:280.00px;font-size:13px;line-height:13px;color:#7a7e90;font-weight:400;transform:scaleX(1.1019);">Allocated</div>
<div id="t64" class="t" style="left:389.8px;top:704.61px;font-size:17px;line-height:17px;color:#141a46;font-weight:700;transform:scaleX(0.8000);">1</div>
<div id="t65" class="t" style="left:365.6px;top:731.38px;font-size:9px;line-height:9px;color:#6f7385;font-weight:400;transform:scaleX(0.9133);">Running GPUs</div>
<div id="t66" class="t" style="left:1030.7px;top:641.88px;font-size:15.5px;line-height:15.5px;color:#0f2b88;font-weight:400;-webkit-text-stroke:0.35px #0f2b88;transform:scaleX(1.0281);">High</div>
<div id="t67" class="t" style="left:1278.1px;top:638.92px;font-size:19px;line-height:19px;color:#0f2b88;font-weight:400;-webkit-text-stroke:0.35px #0f2b88;transform:scaleX(0.8000);">1</div>
<div id="t68" class="t" style="left:1030.7px;top:705.88px;font-size:15.5px;line-height:15.5px;color:#0f2b88;font-weight:400;-webkit-text-stroke:0.35px #0f2b88;transform:scaleX(1.0782);">Medium</div>
<div id="t69" class="t" style="left:1274.3px;top:702.92px;font-size:19px;line-height:19px;color:#0f2b88;font-weight:400;-webkit-text-stroke:0.35px #0f2b88;transform:scaleX(1.0273);">0</div>
</body></html>
